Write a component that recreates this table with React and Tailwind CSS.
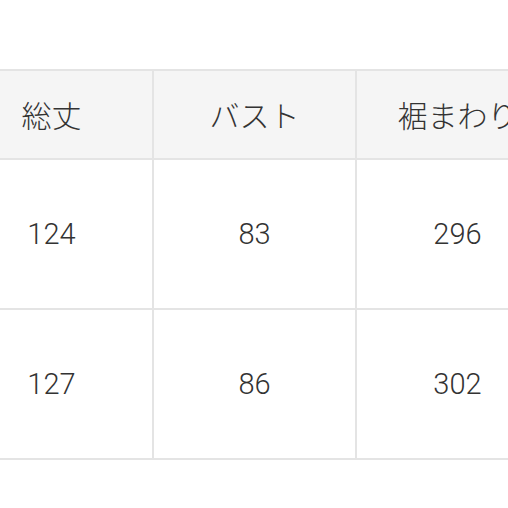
import React from 'react';

const headers = ['総丈', 'バスト', '裾まわり'];
const rows = [
    ['124', '83', '296'],
    ['127', '86', '302'],
];

const App = () => {
    return (
        <div className="w-[508px] h-[508px] overflow-hidden bg-white">
            <div
                className="mt-[69px] ml-[-51px] w-[610px] border-t-2 border-l-2 border-[#e4e4e4] text-[30px] text-[#333333]"
                style={{ fontFamily: '"Noto Sans CJK JP", "Noto Sans", sans-serif' }}
            >
                <div className="grid grid-cols-[203px_203px_203px] bg-[#f5f5f5]">
                    {headers.map((h) => (
                        <div key={h} className="h-[89px] flex items-center justify-center border-r-2 border-b-2 border-[#e4e4e4] whitespace-nowrap font-light">
                            {h}
                        </div>
                    ))}
                </div>
                {rows.map((r, i) => (
                    <div key={i} className="grid grid-cols-[203px_203px_203px] bg-white">
                        {r.map((v, j) => (
                            <div
                                key={j}
                                className="h-[150px] pt-[2px] flex items-center justify-center border-r-2 border-b-2 border-[#e4e4e4] font-[Roboto,sans-serif] font-light text-[29px]"
                            >
                                {v}
                            </div>
                        ))}
                    </div>
                ))}
            </div>
        </div>
    );
};

export default App;
